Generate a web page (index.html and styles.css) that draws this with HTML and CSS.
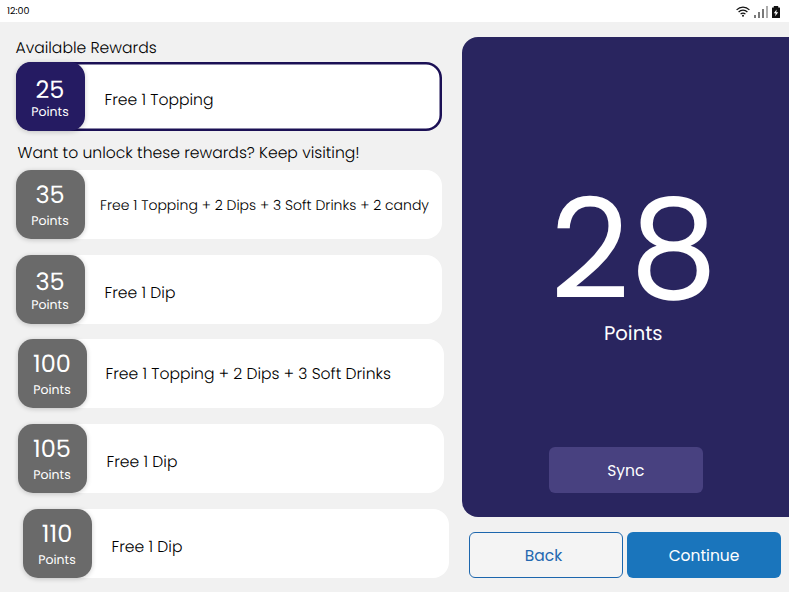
FILE: index.html
```html
<!DOCTYPE html>
<html lang="en">
<head>
	<meta charset="utf-8">
	<title>Rewards</title>
	<link rel="stylesheet" href="styles.css">
</head>
<body>
	<header class="statusbar">
		<span class="clock">12:00</span>
		<div class="icons">
			<svg class="wifi" width="14" height="11" viewBox="0 0 14 11" fill="none" stroke="#111" stroke-width="1.2">
				<path d="M.6 3.8C4.2.1 9.8.1 13.4 3.8"/>
				<path d="M2.6 6C5.1 3.4 8.9 3.4 11.4 6"/>
				<path d="M4.6 8.1C6 6.7 8 6.7 9.4 8.1"/>
				<circle cx="7" cy="9.7" r="1" fill="#111" stroke="none"/>
			</svg>
			<svg class="signal" width="14" height="12" viewBox="0 0 14 12" stroke="#222" stroke-width="1.2">
				<path d="M1 12V9M5 12V6M9 12V3"/>
				<path d="M13 12V0" stroke="#777"/>
			</svg>
			<svg class="battery" width="8" height="12" viewBox="0 0 8 12">
				<path d="M1.800 0h4.400v1.500H7.500q.5 0 .5.500V11.500q0 .5-.5.500H.5q-.5 0-.5-.500V2q0-.5.500-.500h1.300z" fill="#111"/>
				<path d="M4.600 3.500 1.800 7.300h1.800l-.4 3 3-4H4.300z" fill="#fff"/>
			</svg>
		</div>
	</header>
	<main class="screen">
		<section class="rewards">
			<h2 class="title">Available Rewards</h2>
			<div class="reward active">
				<div class="badge low"><span class="num">25</span><span class="pts">Points</span></div>
				<p class="name down">Free 1 Topping</p>
			</div>
			<h2 class="title locked-title">Want to unlock these rewards? Keep visiting!</h2>
			<div class="locked">
				<div class="reward">
					<div class="badge"><span class="num">35</span><span class="pts">Points</span></div>
					<p class="name small">Free 1 Topping + 2 Dips + 3 Soft Drinks + 2 candy</p>
				</div>
				<div class="reward">
					<div class="badge low"><span class="num">35</span><span class="pts">Points</span></div>
					<p class="name down">Free 1 Dip</p>
				</div>
				<div class="reward shift">
					<div class="badge"><span class="num">100</span><span class="pts">Points</span></div>
					<p class="name long">Free 1 Topping + 2 Dips + 3 Soft Drinks</p>
				</div>
				<div class="reward shift">
					<div class="badge"><span class="num">105</span><span class="pts">Points</span></div>
					<p class="name down">Free 1 Dip</p>
				</div>
				<div class="reward shift-more">
					<div class="badge"><span class="num">110</span><span class="pts">Points</span></div>
					<p class="name down">Free 1 Dip</p>
				</div>
			</div>
		</section>
		<aside class="side">
			<div class="balance">
				<div class="total">28</div>
				<div class="total-label">Points</div>
				<button class="btn sync">Sync</button>
			</div>
			<div class="actions">
				<button class="btn back">Back</button>
				<button class="btn continue">Continue</button>
			</div>
		</aside>
	</main>
</body>
</html>
```
FILE: styles.css
```css
* {
	box-sizing: border-box;
}
body {
	margin: 0;
	height: 592px;
	overflow: hidden;
	background: #f1f1f1;
	color: #000;
	font-family: Poppins, Inter, "Open Sans", sans-serif;
	font-weight: 300;
	white-space: nowrap;
	text-rendering: geometricPrecision;
}
.statusbar {
	display: flex;
	justify-content: space-between;
	align-items: center;
	height: 22px;
	padding: 1px 9px 0 7px;
	background: #fff;
}
.clock {
	font-size: 9.500px;
	font-weight: 400;
}
.icons {
	display: flex;
	align-items: center;
	gap: 4px;
}
.screen {
	display: flex;
	justify-content: space-between;
}
.rewards {
	width: 450px;
	padding: 16px 0 0 15.500px;
}
.title {
	margin: 0;
	height: 20px;
	line-height: 22px;
	font-size: 15.600px;
	font-weight: 300;
}
.locked-title {
	margin: 12px 0 7px 2px;
}
.active {
	margin-top: 4px;
}
.reward {
	display: flex;
	width: 426.500px;
	height: 69px;
	background: #fff;
	border-radius: 16px;
}
.active {
	box-shadow: inset 0 0 0 2.500px #1b1055;
}
.locked {
	display: flex;
	flex-direction: column;
	gap: 15.700px;
}
.shift {
	margin-left: 2px;
}
.shift-more {
	margin-left: 7px;
}
.badge {
	display: flex;
	flex-direction: column;
	align-items: center;
	gap: 4px;
	width: 69px;
	height: 69px;
	padding-top: 12.800px;
	border-radius: 15px;
	background: #6a6a6a;
	color: #fff;
	box-shadow: 0 1px 5px rgba(0, 0, 0, 0.2);
}
.badge.low {
	padding-top: 15.300px;
	gap: 1px;
}
.active .badge {
	padding-top: 16px;
	gap: 0;
	background: #251b62;
}
.num {
	font-size: 24px;
	font-weight: 400;
	line-height: 26px;
}
.pts {
	font-size: 12.500px;
	line-height: 18px;
	font-weight: 400;
}
.name {
	margin: 0;
	padding-top: 1px;
	padding-left: 20px;
	line-height: 69px;
	font-size: 15.600px;
}
.name.down {
	padding-top: 4px;
}
.name.small {
	padding-left: 15.500px;
	font-size: 14px;
}
.name.long {
	padding-left: 19px;
}
.side {
	width: 327.500px;
	padding-top: 15px;
}
.balance {
	display: flex;
	flex-direction: column;
	align-items: center;
	height: 480px;
	padding-top: 138px;
	border-radius: 16px 0 0 16px;
	background: #29255f;
	color: #fff;
}
.total {
	height: 150px;
	line-height: 150px;
	font-size: 139px;
	font-weight: 400;
	padding-left: 17px;
}
.total-label {
	margin-top: -4px;
	padding-left: 16px;
	font-size: 19.600px;
	line-height: 24px;
	font-weight: 400;
}
.btn {
	width: 154px;
	height: 46px;
	padding: 0;
	border: 0;
	border-radius: 6px;
	color: #fff;
	font: inherit;
	font-size: 15.500px;
	font-weight: 400;
}
.sync {
	margin: 102px 0 0 1px;
	background: #484180;
}
.actions {
	display: flex;
	gap: 4px;
	padding: 15px 0 0 7.500px;
}
.back {
	padding-right: 5px;
	border: 1.500px solid #1c66ad;
	background: #f4f4f4;
	color: #2468b0;
}
.continue {
	background: #1a75bc;
}
```
